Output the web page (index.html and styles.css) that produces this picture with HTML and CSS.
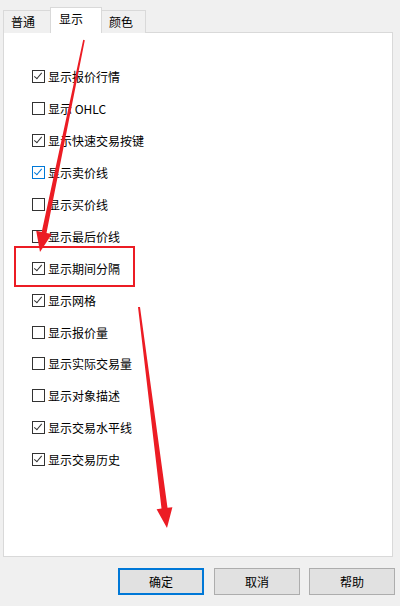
FILE: index.html
```html
<!DOCTYPE html>
<html lang="zh-CN">
<head>
<meta charset="utf-8">
<title>显示</title>
<link rel="stylesheet" href="styles.css">
</head>
<body>
<div class="dialog">
  <div class="tabs">
    <div class="tab">普通</div>
    <div class="tab active">显示</div>
    <div class="tab">颜色</div>
  </div>
  <div class="panel">
    <ul class="options">
      <li class="opt"><span class="cb checked"></span><span>显示报价行情</span></li>
      <li class="opt"><span class="cb"></span><span>显示 OHLC</span></li>
      <li class="opt"><span class="cb checked"></span><span>显示快速交易按键</span></li>
      <li class="opt"><span class="cb checked focus"></span><span>显示卖价线</span></li>
      <li class="opt"><span class="cb"></span><span>显示买价线</span></li>
      <li class="opt"><span class="cb"></span><span>显示最后价线</span></li>
      <li class="opt"><span class="cb checked"></span><span>显示期间分隔</span></li>
      <li class="opt"><span class="cb checked"></span><span>显示网格</span></li>
      <li class="opt"><span class="cb"></span><span>显示报价量</span></li>
      <li class="opt"><span class="cb"></span><span>显示实际交易量</span></li>
      <li class="opt"><span class="cb"></span><span>显示对象描述</span></li>
      <li class="opt"><span class="cb checked"></span><span>显示交易水平线</span></li>
      <li class="opt"><span class="cb checked"></span><span>显示交易历史</span></li>
    </ul>
  </div>
  <div class="buttons">
    <button class="btn default">确定</button>
    <button class="btn">取消</button>
    <button class="btn">帮助</button>
  </div>
</div>
<svg class="annot" width="400" height="606" viewBox="0 0 400 606" xmlns="http://www.w3.org/2000/svg">
  <rect x="15" y="247" width="119" height="39" fill="none" stroke="#ec1c24" stroke-width="2"/>
  <polygon fill="#ec1c24" points="83.2,39.8 84.8,40.2 46.5,232.9 51.9,234 40,252 36.2,230.8 41.7,231.9"/>
  <polygon fill="#ec1c24" points="138,307.1 140,306.9 167.5,507.8 172.4,507.2 167,528 156.6,509.2 161.5,508.6"/>
</svg>
</body>
</html>
```

FILE: styles.css
```css
* { box-sizing: border-box; }
html, body { margin: 0; padding: 0; }
body {
  width: 400px;
  height: 606px;
  background: #f0f0f0;
  font-family: "Noto Sans CJK SC", "Noto Sans", sans-serif;
  font-size: 12px;
  color: #000;
  position: relative;
  overflow: hidden;
}
.dialog {
  padding: 8px 7px 0 3px;
  display: flex;
  flex-direction: column;
}
.tabs {
  display: flex;
  height: 25px;
  align-items: flex-end;
  position: relative;
  z-index: 1;
  margin-bottom: -1px;
}
.tab {
  height: 23px;
  padding: 0 8px 0 7px;
  border: 1px solid #d9d9d9;
  border-bottom: none;
  background: #f0f0f0;
  display: flex;
  align-items: center;
  justify-content: flex-start;
  line-height: 1;
  margin-right: -1px;
}
.tab:first-child { width: 48px; }
.tab.active {
  height: 26px;
  width: 52px;
  background: #fff;
  padding-left: 8px;
  padding-bottom: 3px;
  position: relative;
  z-index: 2;
}
.tab:last-child { width: 45px; }
.panel {
  width: 390px;
  height: 525px;
  background: #fff;
  border: 1px solid #d9d9d9;
}
.options {
  list-style: none;
  margin: 0;
  padding: 28px 0 0 28px;
}
.opt {
  height: 31.9px;
  display: flex;
  align-items: center;
  gap: 3px;
  white-space: nowrap;
}
.cb {
  width: 13px;
  height: 13px;
  border: 1px solid #333;
  background: #fff;
  position: relative;
  flex: none;
}
.cb.checked::after {
  content: "";
  position: absolute;
  left: 3px;
  top: 0px;
  width: 3px;
  height: 7px;
  border-right: 1.5px solid #333;
  border-bottom: 1.5px solid #333;
  transform: rotate(40deg);
}
.cb.focus { border-color: #0078d7; }
.cb.focus::after { border-color: #0078d7; }
.buttons {
  display: flex;
  justify-content: flex-end;
  gap: 9px;
  margin-top: 11px;
  margin-right: -2px;
}
.btn {
  width: 86px;
  height: 27px;
  background: #e1e1e1;
  border: 1px solid #adadad;
  font-family: inherit;
  font-size: 12px;
  color: #000;
  padding: 0;
  margin: 0;
}
.btn.default { border: 2px solid #0078d7; margin-right: 1px; }
.annot {
  position: absolute;
  left: 0;
  top: 0;
  pointer-events: none;
}
```
